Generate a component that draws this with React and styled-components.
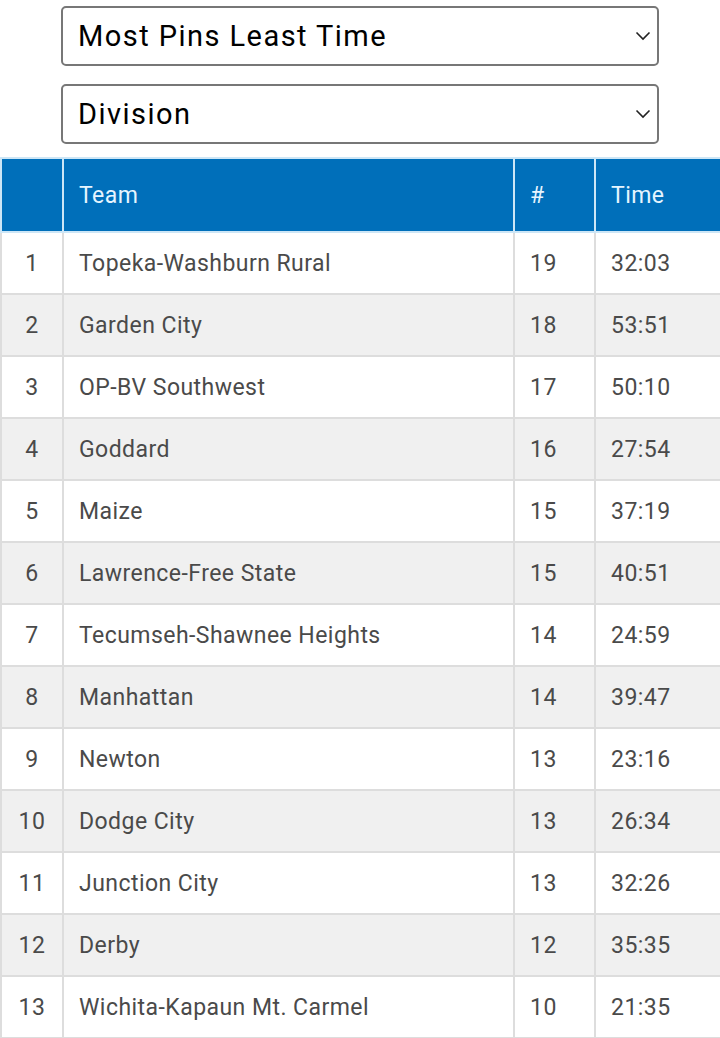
import React from "react";
import styled, { createGlobalStyle } from "styled-components";

const Global = createGlobalStyle`
  html, body { margin: 0; padding: 0; background: #fff; }
  body { font-family: Roboto, "Liberation Sans", sans-serif; }
`;

const Page = styled.div`
  width: 720px;
  display: flex;
  flex-direction: column;
`;

const Filters = styled.div`
  display: flex;
  flex-direction: column;
  gap: 18px;
  padding: 6px 61px 13px 61px;
`;

const SelectWrap = styled.div`
  position: relative;
  width: 598px;
  height: 60px;
`;

const Select = styled.select`
  appearance: none;
  -webkit-appearance: none;
  width: 100%;
  height: 100%;
  box-sizing: border-box;
  border: 2px solid #777;
  border-radius: 5px;
  background: #fff;
  font-family: Roboto, "Liberation Sans", sans-serif;
  font-size: 29px;
  letter-spacing: 1.45px;
  color: #000;
  padding: 0 40px 0 15px;
  outline: none;
`;

const Chevron = styled.svg`
  position: absolute;
  right: 8px;
  top: 50%;
  transform: translateY(-50%);
  width: 16px;
  height: 10px;
  pointer-events: none;
`;

const Table = styled.table`
  width: 720px;
  border-collapse: collapse;
  table-layout: fixed;
  font-family: Roboto, "Liberation Sans", sans-serif;
  font-size: 23px;
  letter-spacing: 0.45px;
`;

const Th = styled.th`
  background: #006fba;
  color: #e6f5ff;
  font-weight: 400;
  text-align: ${p => (p.$center ? "center" : "left")};
  height: 72px;
  padding: 0 15px;
  border: 2px solid #cde6f6;
`;

const Row = styled.tr`
  background: ${p => (p.$alt ? "#f0f0f0" : "#fff")};
`;

const Td = styled.td`
  color: #4a4a4a;
  height: 60px;
  padding: 0 ${p => (p.$center ? "0" : "15px")};
  text-align: ${p => (p.$center ? "center" : "left")};
  border: 2px solid #dddddd;
  white-space: nowrap;
`;

const rows = [
  ["Topeka-Washburn Rural", 19, "32:03"],
  ["Garden City", 18, "53:51"],
  ["OP-BV Southwest", 17, "50:10"],
  ["Goddard", 16, "27:54"],
  ["Maize", 15, "37:19"],
  ["Lawrence-Free State", 15, "40:51"],
  ["Tecumseh-Shawnee Heights", 14, "24:59"],
  ["Manhattan", 14, "39:47"],
  ["Newton", 13, "23:16"],
  ["Dodge City", 13, "26:34"],
  ["Junction City", 13, "32:26"],
  ["Derby", 12, "35:35"],
  ["Wichita-Kapaun Mt. Carmel", 10, "21:35"],
];

function Dropdown({ value }) {
  return (
    <SelectWrap>
      <Select defaultValue={value}>
        <option value={value}>{value}</option>
      </Select>
      <Chevron viewBox="0 0 16 10">
        <path d="M1.5 1.5 L8 8 L14.5 1.5" fill="none" stroke="#222" strokeWidth="1.6" />
      </Chevron>
    </SelectWrap>
  );
}

export default function App() {
  return (
    <Page>
      <Global />
      <Filters>
        <Dropdown value="Most Pins Least Time" />
        <Dropdown value="Division" />
      </Filters>
      <Table>
        <colgroup>
          <col style={{ width: 62 }} />
          <col style={{ width: 451 }} />
          <col style={{ width: 81 }} />
          <col style={{ width: 126 }} />
        </colgroup>
        <thead>
          <tr>
            <Th $center></Th>
            <Th>Team</Th>
            <Th>#</Th>
            <Th>Time</Th>
          </tr>
        </thead>
        <tbody>
          {rows.map((r, i) => (
            <Row key={i} $alt={i % 2 === 1}>
              <Td $center>{i + 1}</Td>
              <Td>{r[0]}</Td>
              <Td>{r[1]}</Td>
              <Td>{r[2]}</Td>
            </Row>
          ))}
        </tbody>
      </Table>
    </Page>
  );
}
